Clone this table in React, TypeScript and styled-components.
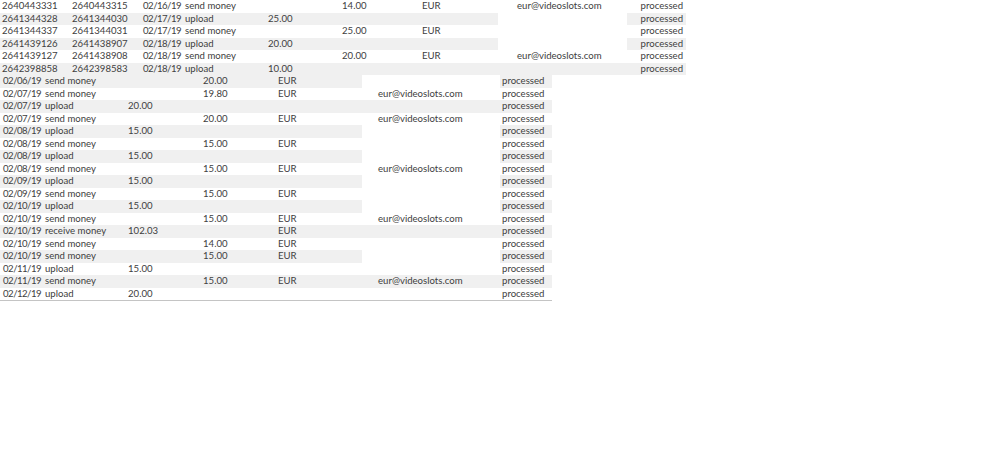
import React from 'react';
import styled, { createGlobalStyle } from 'styled-components';

const GlobalStyle = createGlobalStyle`
	html, body {
		margin: 0;
		padding: 0;
		background: #ffffff;
	}
	body {
		font-family: Lato, 'Open Sans', Arial, sans-serif;
		font-size: 9.6px;
		color: #404040;
	}
`;

const Page = styled.div`
	display: flex;
	flex-direction: column;
	align-items: flex-start;
`;

const Sheet = styled.div<{ $cols: string; $ruled?: boolean }>`
	display: grid;
	grid-template-columns: ${(p) => p.$cols};
	grid-auto-rows: 12.5px;
	border-bottom: ${(p) => (p.$ruled ? '1px solid #c4c4c4' : 'none')};
`;

const Row = styled.div<{ $shade: boolean }>`
	display: contents;
	& > span {
		background: ${(p) => (p.$shade ? '#f0f0f0' : '#ffffff')};
	}
`;

const Cell = styled.span<{ $pad?: number; $align?: 'left' | 'right'; $masked?: boolean }>`
	display: block;
	padding-left: ${(p) => p.$pad ?? 2}px;
	padding-right: ${(p) => (p.$align === 'right' ? 3 : 0)}px;
	text-align: ${(p) => p.$align ?? 'left'};
	line-height: 12.5px;
	white-space: nowrap;
	&& {
		background: ${(p) => (p.$masked ? '#ffffff' : undefined)};
	}
`;

// dates in the sheet are set tighter than the rest
const DateCell = styled(Cell)`
	letter-spacing: -0.5px;
`;

type TopRow = [string, string, string, string, string, string, string, string, boolean?];

const topRows: TopRow[] = [
	['2640443331', '2640443315', '02/16/19', 'send money', '', '14.00', 'EUR', 'eur@videoslots.com'],
	['2641344328', '2641344030', '02/17/19', 'upload', '25.00', '', '', '', true],
	['2641344337', '2641344031', '02/17/19', 'send money', '', '25.00', 'EUR', ''],
	['2641439126', '2641438907', '02/18/19', 'upload', '20.00', '', '', '', true],
	['2641439127', '2641438908', '02/18/19', 'send money', '', '20.00', 'EUR', 'eur@videoslots.com'],
	['2642398858', '2642398583', '02/18/19', 'upload', '10.00', '', '', '']
];

type LogRow = [string, string, string, string, string, string, boolean?];

const logRows: LogRow[] = [
	['02/06/19', 'send money', '', '20.00', 'EUR', '', true],
	['02/07/19', 'send money', '', '19.80', 'EUR', 'eur@videoslots.com'],
	['02/07/19', 'upload', '20.00', '', '', ''],
	['02/07/19', 'send money', '', '20.00', 'EUR', 'eur@videoslots.com'],
	['02/08/19', 'upload', '15.00', '', '', '', true],
	['02/08/19', 'send money', '', '15.00', 'EUR', ''],
	['02/08/19', 'upload', '15.00', '', '', '', true],
	['02/08/19', 'send money', '', '15.00', 'EUR', 'eur@videoslots.com'],
	['02/09/19', 'upload', '15.00', '', '', '', true],
	['02/09/19', 'send money', '', '15.00', 'EUR', ''],
	['02/10/19', 'upload', '15.00', '', '', '', true],
	['02/10/19', 'send money', '', '15.00', 'EUR', 'eur@videoslots.com'],
	['02/10/19', 'receive money', '102.03', '', 'EUR', ''],
	['02/10/19', 'send money', '', '14.00', 'EUR', ''],
	['02/10/19', 'send money', '', '15.00', 'EUR', '', true],
	['02/11/19', 'upload', '15.00', '', '', ''],
	['02/11/19', 'send money', '', '15.00', 'EUR', 'eur@videoslots.com'],
	['02/12/19', 'upload', '20.00', '', '', '']
];

const TransferSheet = () => (
	<Sheet $cols='70px 71px 42px 82px 76px 74px 83px 129px 59px'>
		{topRows.map(([id, ref, date, kind, upload, sent, currency, email, masked], i) => (
			<Row key={id} $shade={i % 2 === 1}>
				<Cell>{id}</Cell>
				<Cell>{ref}</Cell>
				<DateCell>{date}</DateCell>
				<Cell>{kind}</Cell>
				<Cell $pad={3}>{upload}</Cell>
				<Cell $pad={1}>{sent}</Cell>
				<Cell $pad={7}>{currency}</Cell>
				<Cell $pad={19} $masked={masked}>{email}</Cell>
				<Cell $align='right'>processed</Cell>
			</Row>
		))}
	</Sheet>
);

const HistorySheet = () => (
	<Sheet $cols='43px 83px 75px 75px 86px 138px 52px' $ruled>
		{logRows.map(([date, kind, upload, sent, currency, email, masked], i) => (
			<Row key={i} $shade={i % 2 === 0}>
				<DateCell $pad={3}>{date}</DateCell>
				<Cell $pad={2}>{kind}</Cell>
				<Cell $pad={2}>{upload}</Cell>
				<Cell $pad={2}>{sent}</Cell>
				<Cell $pad={2}>{currency}</Cell>
				<Cell $pad={16} $masked={masked}>{email}</Cell>
				<Cell $pad={2}>processed</Cell>
			</Row>
		))}
	</Sheet>
);

export default function App() {
	return (
		<>
			<GlobalStyle />
			<Page>
				<TransferSheet />
				<HistorySheet />
			</Page>
		</>
	);
}
